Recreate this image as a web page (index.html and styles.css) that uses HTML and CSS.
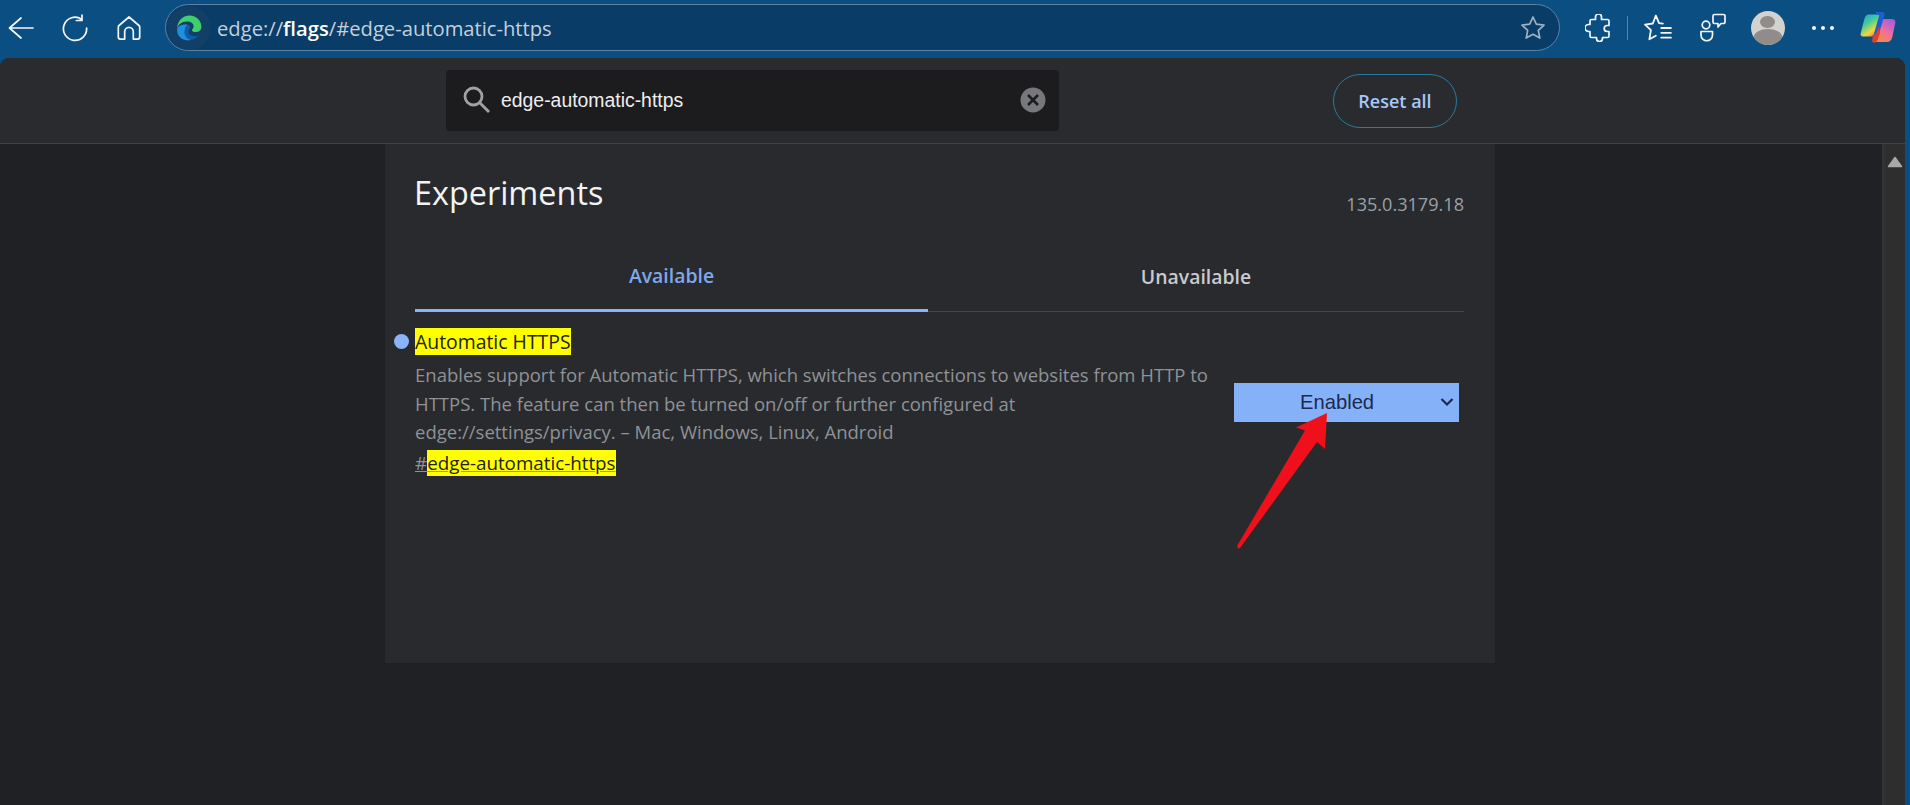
FILE: index.html
```html
<!DOCTYPE html>
<html lang="en">
<head>
  <meta charset="UTF-8" />
  <title>Experiments</title>
  <link rel="stylesheet" href="styles.css">
</head>
<body>

  <header class="toolbar">
    <div class="nav-group">
      <div class="tb-btn">
        <svg width="26" height="26" viewBox="0 0 26 26" class="line-icon"><path d="M13 3 1.500 13 13 23M1.500 13H25"/></svg>
      </div>
      <div class="tb-btn">
        <svg width="28" height="28" viewBox="0 0 28 28" class="line-icon"><path d="M20.500 5.200A11.600 11.600 0 1 0 25.600 14M21 1v5.500h-5.600"/></svg>
      </div>
      <div class="tb-btn">
        <svg width="26" height="26" viewBox="0 0 26 26" class="line-icon"><path d="M13 2 3 10.500a2 2 0 0 0-.7 1.600v10a2 2 0 0 0 2 2h4.400v-7.500a4.300 4.300 0 0 1 8.600 0v7.500h4.400a2 2 0 0 0 2-2v-10a2 2 0 0 0-.7-1.600Z"/></svg>
      </div>
    </div>

    <div class="address-bar">
      <div class="site-badge">
        <svg width="28" height="28" viewBox="0 0 26 26">
          <path d="M2 14C2 6.500 7 1.500 13.500 1.500 20 1.500 24.500 6.500 24.500 12c0 3-2.500 4.800-5.500 4.800-2 0-3.200-.8-3.200-1.800 0-1.500 1.500-1.500 1.500-3.500 0-2.800-2.800-4.500-6-4.500C6 7 2.500 10 2 14Z" fill="#3ecf6f"/>
          <path d="M2 14c-.5 6 4 10.500 10 10.500 1.500 0 2.500-.2 3.500-.6-4-.2-6.500-3.400-6.500-7 0-3.200 1.200-5.500 3-7-5.500-.8-9.500 1.500-10 4.100Z" fill="#1f8fe0"/>
          <path d="M12 9.800c-2 1.500-3 3.800-3 7.100 0 3.600 2.500 6.800 6.500 7 2.300-.6 4.500-2 6-4-3.500 1.500-9 .5-9-3.400 0-1.500.8-2.500 2-3.200-.4-1.800-1-3-2.500-3.500Z" fill="#0d5ea8"/>
        </svg>
      </div>
      <div class="address-text">edge://<strong>flags</strong>/#edge-automatic-https</div>
      <svg class="fav-star" width="26" height="26" viewBox="0 0 26 26"><path d="m13 2 3.300 7.200 7.700.9-5.700 5.300 1.500 7.700L13 19.300l-6.800 3.800 1.500-7.700L2 10.100l7.700-.9Z"/></svg>
    </div>

    <div class="tool-group">
      <div class="tb-btn">
        <svg width="26" height="28" viewBox="0 0 26 28" class="line-icon"><path d="M10 3.500a3 3 0 0 1 6 0V6h6a1.500 1.500 0 0 1 1.500 1.500V12h-1.800a3 3 0 0 0 0 6h1.800v4.500A1.500 1.500 0 0 1 22 24h-5v1a3 3 0 0 1-6 0v-1H6a1.500 1.500 0 0 1-1.500-1.500V18H3a3.500 3.500 0 0 1 0-7h1.500V7.500A1.500 1.500 0 0 1 6 6h4Z" transform="translate(.5 -.5)"/></svg>
      </div>
      <div class="tb-sep"></div>
      <div class="tb-btn">
        <svg width="28" height="28" viewBox="0 0 26 26" class="line-icon"><path d="M11 1.500 8.200 8.800 1 9.800l5.400 5.200L5 23.500l6-3.300M11 1.500l3 7 3.500.4M16 13h9M16 17.500h9M16 22h9"/></svg>
      </div>
      <div class="tb-btn">
        <svg width="26" height="30" viewBox="0 0 26 30" class="line-icon"><circle cx="6" cy="12" r="3.800"/><path d="M1 18.500h11.500v3.500a5.700 5.700 0 0 1-11.500 0ZM14.500 1.500h9a1.500 1.500 0 0 1 1.500 1.500v6a1.500 1.500 0 0 1-1.500 1.500h-2.500l-3 3.500v-3.500h-3.500a1.500 1.500 0 0 1-1.500-1.500V3a1.500 1.500 0 0 1 1.500-1.500Z"/></svg>
      </div>
      <div class="tb-btn">
        <div class="avatar">
          <div class="avatar-head"></div>
          <div class="avatar-body"></div>
        </div>
      </div>
      <div class="tb-btn">
        <div class="dots"><i></i><i></i><i></i></div>
      </div>
      <div class="tb-btn">
        <svg width="36" height="34" viewBox="0 0 36 34">
          <defs>
            <linearGradient id="copilotLeft" x1="0" y1="0" x2="0.6" y2="1">
              <stop offset="0" stop-color="#2f8fe8"/>
              <stop offset="0.45" stop-color="#3fcf9a"/>
              <stop offset="0.8" stop-color="#f4d63a"/>
              <stop offset="1" stop-color="#f09a3a"/>
            </linearGradient>
            <linearGradient id="copilotRight" x1="0.8" y1="0" x2="0.2" y2="1">
              <stop offset="0" stop-color="#a45ce0"/>
              <stop offset="0.5" stop-color="#ee6fa0"/>
              <stop offset="1" stop-color="#fb8a3c"/>
            </linearGradient>
          </defs>
          <path d="M9 3.500h10c1.500 0 1 1.500.5 3l-5 16c-.6 2-2.200 3-4 3H3c-2 0-2.800-1.500-2.300-3.200L4.500 7.500C5.500 4.500 6.800 3.500 9 3.500Z" fill="url(#copilotLeft)"/>
          <path d="M22 8h9.500c2.700 0 4.300 1.400 3.800 4l-3 14c-.6 3-2.500 5-5.500 5H15c-1.500 0-1.200-1.500-.5-3.200L20 10.500C20.400 9 21 8 22 8Z" fill="url(#copilotRight)"/>
          <path d="M16 1h6c1.800 0 3 1.200 2.500 3l-6.800 23c-.6 2-1.700 3.800-3.700 4-1.500.2-2.200-.8-1.700-2.500L19 5c.3-1.200-.6-1.500-3-1.500Z" fill="#1d5fd0"/>
          <path d="M12.500 24c2 0 3.500-1 4.300-3l2.200-6 1 7-2.500 7c-.7 2-2 3-3.700 2.800-1.500-.2-2-1.500-1.300-3.200Z" fill="#e0402a"/>
        </svg>
      </div>
    </div>
  </header>

  <div class="page">
    <div class="flags-header">
      <div class="flags-header-inner">
        <div class="search-box">
          <svg width="30" height="30" viewBox="0 0 30 30" class="search-icon"><circle cx="11.500" cy="11.500" r="8.500"/><path d="m18 18 9 9"/></svg>
          <span class="search-text">edge-automatic-https</span>
          <div class="search-clear">
            <svg width="26" height="26" viewBox="0 0 26 26"><circle cx="13" cy="13" r="12.500" fill="#77787c"/><path d="m8 8 10 10M18 8 8 18" stroke="#1c1c1e" stroke-width="2.600"/></svg>
          </div>
        </div>
        <div class="reset-btn">Reset all</div>
      </div>
    </div>

    <div class="content">
      <div class="scroll-area">
        <main class="card">
          <div class="card-head">
            <h1>Experiments</h1>
            <span class="version">135.0.3179.18</span>
          </div>

          <div class="tabs">
            <div class="tab active">Available</div>
            <div class="tab">Unavailable</div>
          </div>

          <div class="flag-row">
            <div class="flag-dot"></div>
            <div class="flag-text">
              <div class="flag-title"><mark>Automatic HTTPS</mark></div>
              <p class="flag-desc">Enables support for Automatic HTTPS, which switches connections to websites from HTTP to HTTPS. The feature can then be turned on/off or further configured at edge://settings/privacy. – Mac, Windows, Linux, Android</p>
              <a class="flag-link">#<mark>edge-automatic-https</mark></a>
            </div>
            <div class="flag-select">
              <span>Enabled</span>
              <svg width="14" height="10" viewBox="0 0 14 10"><path d="m1.500 2 5.500 5.500L12.500 2" fill="none" stroke="#1b2a4e" stroke-width="2.200"/></svg>
            </div>
          </div>

          <svg class="red-arrow" width="92" height="136" viewBox="0 0 92 136">
            <path d="M90 0 59 14.500 68 17.500 0 133 1 135.500 3 135 80 29 88 36Z" fill="#f0101c"/>
          </svg>
        </main>
      </div>

      <div class="scrollbar">
        <svg width="16" height="12" viewBox="0 0 16 12"><path d="M8 1.500 14.500 10.500H1.500Z" fill="#a8a8a8" stroke="#a8a8a8" stroke-width="1.500" stroke-linejoin="round"/></svg>
      </div>
    </div>
  </div>

</body>
</html>
```

FILE: styles.css
```css
html, body {
  height: 100%;
}

body {
  margin: 0;
  display: flex;
  flex-direction: column;
  overflow: hidden;
  font-family: "Open Sans", "Noto Sans", sans-serif;
  background-color: #0b4f82;
}

/* toolbar */
.toolbar {
  display: flex;
  align-items: center;
  height: 58px;
  flex-shrink: 0;
  padding-right: 5px;
  padding-bottom: 3px;
  box-sizing: border-box;
}

.nav-group {
  display: flex;
  margin-left: -6px;
}

.tb-btn {
  width: 54px;
  display: flex;
  align-items: center;
  justify-content: center;
}

.line-icon {
  fill: none;
  stroke: #f2f6fa;
  stroke-width: 1.7;
  stroke-linecap: round;
  stroke-linejoin: round;
}

.address-bar {
  flex: 1;
  height: 47px;
  margin-left: 9px;
  margin-right: 10px;
  display: flex;
  align-items: center;
  box-sizing: border-box;
  background: #093c66;
  border: 1.5px solid #5c83a5;
  border-radius: 24px;
}

.site-badge {
  width: 44px;
  height: 44px;
  margin-left: 1px;
  border-radius: 50%;
  background: #123f66;
  display: flex;
  align-items: center;
  justify-content: center;
}

.address-text {
  margin-left: 6px;
  font-size: 20.2px;
  color: #c3d0dc;
}

.address-text strong {
  color: #fff;
  font-weight: 600;
}

.fav-star {
  margin-left: auto;
  margin-right: 13px;
  fill: none;
  stroke: #9fb2c3;
  stroke-width: 1.7;
  stroke-linejoin: round;
}

.tool-group {
  display: flex;
  align-items: center;
}

.tool-group .tb-btn {
  width: 55px;
}

.tb-sep {
  width: 1px;
  height: 24px;
  margin: 0 2px;
  background: #5c83a5;
}

.avatar {
  width: 34px;
  height: 34px;
  border-radius: 50%;
  overflow: hidden;
  background: #d4d2cf;
  display: flex;
  flex-direction: column;
  align-items: center;
}

.avatar-head {
  width: 15px;
  height: 16px;
  margin-top: 5px;
  border-radius: 50%;
  background: #8f8c8a;
}

.avatar-body {
  width: 28px;
  height: 20px;
  margin-top: 1px;
  border-radius: 50%;
  background: #8f8c8a;
}

.dots {
  display: flex;
  gap: 5px;
}

.dots i {
  width: 4px;
  height: 4px;
  border-radius: 50%;
  background: #f2f6fa;
}

/* page */
.page {
  flex: 1;
  min-height: 0;
  margin-right: 5px;
  display: flex;
  flex-direction: column;
  background: #202124;
  border-radius: 9px 9px 0 0;
  overflow: hidden;
}

.flags-header {
  height: 86px;
  flex-shrink: 0;
  box-sizing: border-box;
  padding-right: 25px;
  background: #2a2b2f;
  border-bottom: 1px solid #414245;
}

.flags-header-inner {
  width: 1110px;
  height: 100%;
  margin: 0 auto;
  box-sizing: border-box;
  padding: 0 38px 0 61px;
  display: flex;
  align-items: center;
  justify-content: space-between;
}

.search-box {
  width: 613px;
  height: 61px;
  margin-top: -1px;
  box-sizing: border-box;
  padding: 0 13px 0 16px;
  display: flex;
  align-items: center;
  background: #1c1c1e;
  border-radius: 4px;
}

.search-icon {
  fill: none;
  stroke: #a0a1a3;
  stroke-width: 2.8;
}

.search-text {
  margin-left: 9px;
  font-family: "Liberation Sans", Arial, sans-serif;
  font-size: 19.4px;
  color: #eeeeee;
}

.search-clear {
  margin-left: auto;
  display: flex;
}

.reset-btn {
  width: 124px;
  height: 54px;
  box-sizing: border-box;
  display: flex;
  align-items: center;
  justify-content: center;
  border: 1px solid #2c7a9f;
  border-radius: 27px;
  font-size: 18px;
  font-weight: 600;
  color: #a8c7fa;
}

.content {
  flex: 1;
  min-height: 0;
  display: flex;
}

.scroll-area {
  flex: 1;
  min-width: 0;
  padding-right: 2px;
}

.card {
  position: relative;
  width: 1110px;
  height: 519px;
  margin: 0 auto;
  box-sizing: border-box;
  padding: 0 31px 0 30px;
  background: #292a2e;
}

.card-head {
  display: flex;
  justify-content: space-between;
  height: 100px;
}

.card-head h1 {
  margin: 25px 0 0 -1px;
  font-size: 32.4px;
  font-weight: 400;
  line-height: 46px;
  color: #f1f3f4;
}

.version {
  margin-top: 46px;
  font-size: 18.1px;
  line-height: 28px;
  color: #9aa0a6;
}

.tabs {
  display: flex;
  height: 67px;
  border-bottom: 1px solid #45464a;
}

.tab {
  flex: 1;
  display: flex;
  align-items: center;
  justify-content: center;
  padding-bottom: 2px;
  box-sizing: border-box;
  font-size: 19.4px;
  font-weight: 600;
  color: #c9cbce;
}

.tab.active {
  flex: 0 0 513px;
  color: #7fa9ec;
  border-bottom: 3px solid #8ab4f8;
  margin-bottom: -1px;
  height: 68px;
}

.flag-row {
  position: relative;
  display: flex;
  align-items: center;
  justify-content: space-between;
  margin-top: 15px;
}

.flag-dot {
  position: absolute;
  left: -21px;
  top: 7px;
  width: 15px;
  height: 15px;
  border-radius: 50%;
  background: #8ab4f8;
}

.flag-text {
  width: 800px;
}

.flag-title {
  font-size: 19.4px;
  font-weight: 500;
  line-height: 29px;
  margin-bottom: 5px;
}

mark {
  background: #ffff00;
  color: #23230a;
}

.flag-desc {
  margin: 0;
  font-size: 18.5px;
  line-height: 28.5px;
  color: #8f9296;
}

.flag-link {
  display: block;
  margin-top: 3px;
  font-size: 18.8px;
  line-height: 26px;
  color: #8f9296;
  text-decoration: underline;
}

.flag-select {
  width: 225px;
  height: 39px;
  margin-right: 5px;
  margin-top: 2px;
  box-sizing: border-box;
  padding: 0 5px 0 66px;
  display: flex;
  align-items: center;
  justify-content: space-between;
  background: #85b1f9;
  font-family: "Liberation Sans", Arial, sans-serif;
  font-size: 20.2px;
  color: #1b2a4e;
}

.red-arrow {
  position: absolute;
  left: 852px;
  top: 269px;
}

.scrollbar {
  width: 23px;
  flex-shrink: 0;
  box-sizing: border-box;
  padding-top: 12px;
  display: flex;
  align-items: flex-start;
  justify-content: center;
  background: #2e2e2e;
  border-left: 3px solid #333336;
}
```
